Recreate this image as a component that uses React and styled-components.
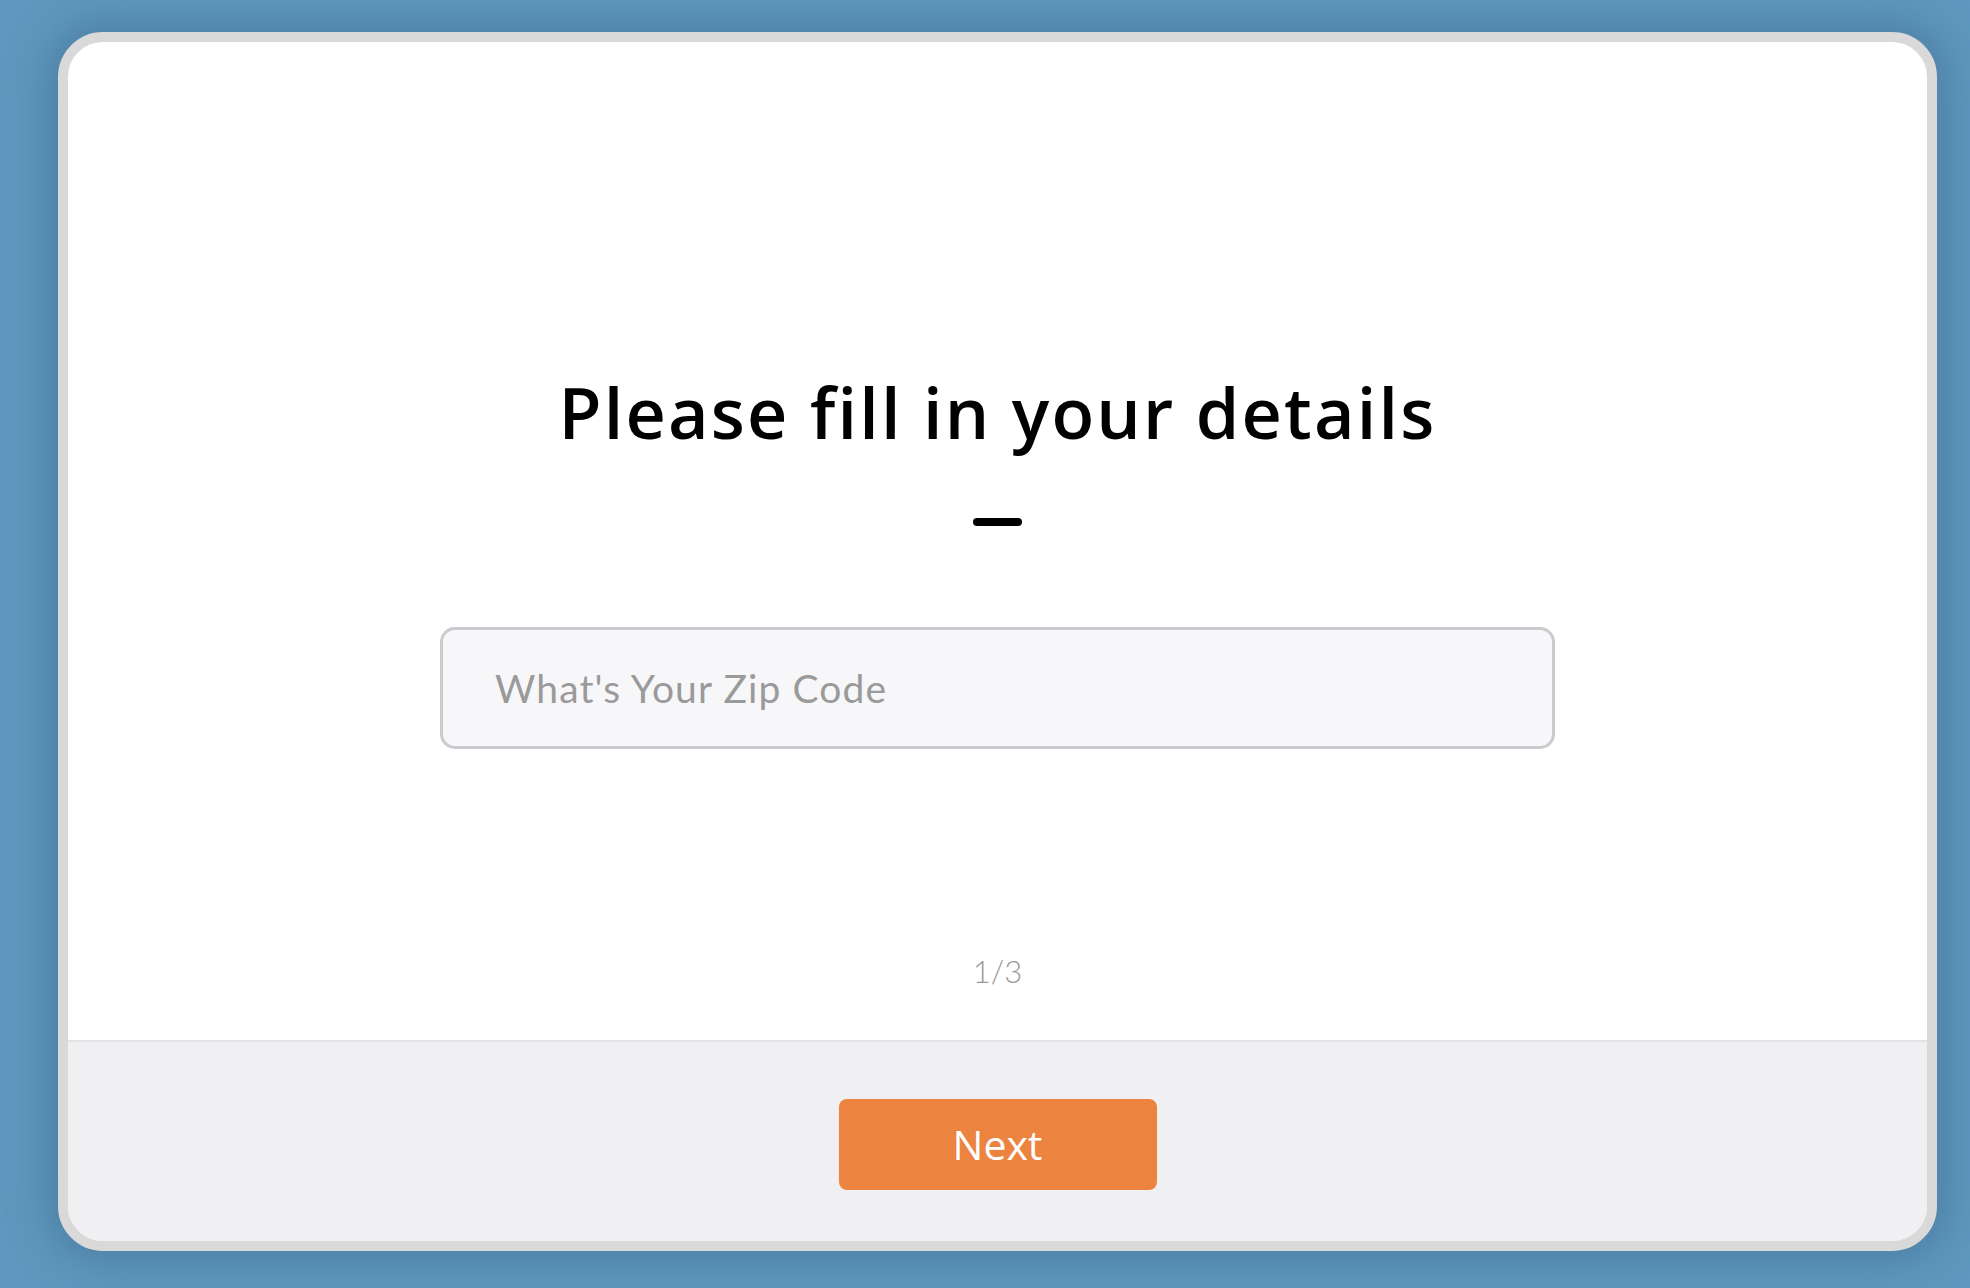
import React from 'react';
import styled, { createGlobalStyle } from 'styled-components';

const GlobalStyle = createGlobalStyle`
  html, body {
    margin: 0;
    padding: 0;
    background: #5e98be;
  }
  body {
    font-family: "Open Sans", "Liberation Sans", sans-serif;
  }
  * { box-sizing: border-box; }
`;

const Page = styled.div`
  width: 1970px;
  height: 1288px;
  padding: 32px 33px 37px 58px;
  background: #5e98be;
`;

const Card = styled.div`
  width: 100%;
  height: 100%;
  display: flex;
  flex-direction: column;
  border: 10px solid #d9d9d9;
  border-radius: 45px;
  overflow: hidden;
  background: #ffffff;
  box-shadow: 0 0 40px 12px rgba(60, 100, 135, 0.45);
`;

const Body = styled.div`
  flex: 1;
  display: flex;
  flex-direction: column;
  align-items: center;
  padding-top: 330px;
`;

const Title = styled.h1`
  margin: 0;
  font-family: "Open Sans", sans-serif;
  font-weight: 600;
  font-size: 70px;
  line-height: 80px;
  color: #000;
  letter-spacing: 2.2px;
`;

const Dash = styled.div`
  width: 49px;
  height: 8px;
  border-radius: 4px;
  background: #000;
  margin-top: 66px;
`;

const ZipInput = styled.input`
  margin-top: 101px;
  width: 1115px;
  height: 122px;
  border: 3px solid #cbcbcf;
  border-radius: 15px;
  background: #f7f7f9;
  padding: 0 0 0 52px;
  font-family: "Lato", sans-serif;
  font-size: 39px;
  letter-spacing: 1.1px;
  color: #333;
  outline: none;

  &::placeholder {
    color: #9a9a9a;
  }
`;

const Step = styled.div`
  margin-top: auto;
  margin-bottom: 50px;
  font-family: "Lato", sans-serif;
  font-weight: 300;
  font-size: 31px;
  color: #9a9a9a;
`;

const Footer = styled.div`
  height: 201px;
  flex-shrink: 0;
  display: flex;
  align-items: center;
  justify-content: center;
  padding-top: 5px;
  background: #f0f0f2;
  border-top: 2px solid #e3e3e5;
`;

const NextButton = styled.button`
  width: 318px;
  height: 91px;
  border: none;
  border-radius: 8px;
  background: #ec833f;
  color: #fff;
  font-family: "Open Sans", sans-serif;
  font-size: 41px;
  font-weight: 400;
  cursor: pointer;
`;

export default function App() {
  return (
    <>
      <GlobalStyle />
      <Page>
        <Card>
          <Body>
            <Title>Please fill in your details</Title>
            <Dash />
            <ZipInput type="text" placeholder="What's Your Zip Code" />
            <Step>1/3</Step>
          </Body>
          <Footer>
            <NextButton>Next</NextButton>
          </Footer>
        </Card>
      </Page>
    </>
  );
}
